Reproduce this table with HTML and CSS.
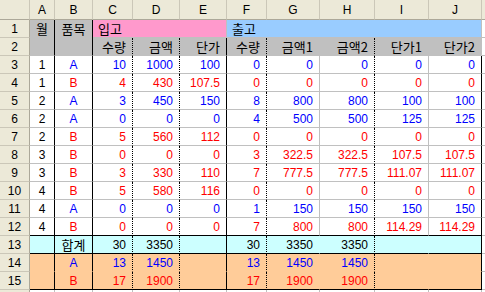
FILE: index.html
```html
<!DOCTYPE html>
<html lang="ko">
<head>
<meta charset="utf-8">
<link rel="stylesheet" href="styles.css">
</head>
<body>
<div class="sheet">
  <div class="row">
    <div class="ch"></div>
    <div class="ch">A</div><div class="ch">B</div><div class="ch">C</div><div class="ch">D</div><div class="ch">E</div>
    <div class="ch">F</div><div class="ch">G</div><div class="ch">H</div><div class="ch">I</div><div class="ch">J</div><div class="ch"></div>
  </div>

  <div class="row">
    <div class="rh">1</div>
    <div class="c g top ctr rb span2 ko">월</div>
    <div class="c g top ctr rb span2 ko">품목</div>
    <div class="c pink title span3 ko">입고</div>
    <div class="c sky title span5 ko">출고</div>
    <div class="c"></div>
  </div>

  <div class="row">
    <div class="rh">2</div>
    <div class="c g num rd ko">수량</div>
    <div class="c g num rd ko">금액</div>
    <div class="c g num rb ko">단가</div>
    <div class="c g num rd ko">수량</div>
    <div class="c g num ko">금액1</div>
    <div class="c g num rd ko">금액2</div>
    <div class="c g num ko">단가1</div>
    <div class="c g num ko">단가2</div>
    <div class="c"></div>
  </div>

  <div class="row blue">
    <div class="rh">3</div>
    <div class="c ctr rb k">1</div><div class="c ctr rb">A</div>
    <div class="c num rd">10</div><div class="c num rd">1000</div><div class="c num rb">100</div>
    <div class="c num rd">0</div><div class="c num">0</div><div class="c num rd">0</div><div class="c num">0</div><div class="c num rb">0</div>
    <div class="c"></div>
  </div>

  <div class="row red">
    <div class="rh">4</div>
    <div class="c ctr rb k">1</div><div class="c ctr rb">B</div>
    <div class="c num rd">4</div><div class="c num rd">430</div><div class="c num rb">107.5</div>
    <div class="c num rd">0</div><div class="c num">0</div><div class="c num rd">0</div><div class="c num">0</div><div class="c num rb">0</div>
    <div class="c"></div>
  </div>

  <div class="row blue">
    <div class="rh">5</div>
    <div class="c ctr rb k">2</div><div class="c ctr rb">A</div>
    <div class="c num rd">3</div><div class="c num rd">450</div><div class="c num rb">150</div>
    <div class="c num rd">8</div><div class="c num">800</div><div class="c num rd">800</div><div class="c num">100</div><div class="c num rb">100</div>
    <div class="c"></div>
  </div>

  <div class="row blue">
    <div class="rh">6</div>
    <div class="c ctr rb k">2</div><div class="c ctr rb">A</div>
    <div class="c num rd">0</div><div class="c num rd">0</div><div class="c num rb">0</div>
    <div class="c num rd">4</div><div class="c num">500</div><div class="c num rd">500</div><div class="c num">125</div><div class="c num rb">125</div>
    <div class="c"></div>
  </div>

  <div class="row red">
    <div class="rh">7</div>
    <div class="c ctr rb k">2</div><div class="c ctr rb">B</div>
    <div class="c num rd">5</div><div class="c num rd">560</div><div class="c num rb">112</div>
    <div class="c num rd">0</div><div class="c num">0</div><div class="c num rd">0</div><div class="c num">0</div><div class="c num rb">0</div>
    <div class="c"></div>
  </div>

  <div class="row red">
    <div class="rh">8</div>
    <div class="c ctr rb k">3</div><div class="c ctr rb">B</div>
    <div class="c num rd">0</div><div class="c num rd">0</div><div class="c num rb">0</div>
    <div class="c num rd">3</div><div class="c num">322.5</div><div class="c num rd">322.5</div><div class="c num">107.5</div><div class="c num rb">107.5</div>
    <div class="c"></div>
  </div>

  <div class="row red">
    <div class="rh">9</div>
    <div class="c ctr rb k">3</div><div class="c ctr rb">B</div>
    <div class="c num rd">3</div><div class="c num rd">330</div><div class="c num rb">110</div>
    <div class="c num rd">7</div><div class="c num">777.5</div><div class="c num rd">777.5</div><div class="c num">111.07</div><div class="c num rb">111.07</div>
    <div class="c"></div>
  </div>

  <div class="row red">
    <div class="rh">10</div>
    <div class="c ctr rb k">4</div><div class="c ctr rb">B</div>
    <div class="c num rd">5</div><div class="c num rd">580</div><div class="c num rb">116</div>
    <div class="c num rd">0</div><div class="c num">0</div><div class="c num rd">0</div><div class="c num">0</div><div class="c num rb">0</div>
    <div class="c"></div>
  </div>

  <div class="row blue">
    <div class="rh">11</div>
    <div class="c ctr rb k">4</div><div class="c ctr rb">A</div>
    <div class="c num rd">0</div><div class="c num rd">0</div><div class="c num rb">0</div>
    <div class="c num rd">1</div><div class="c num">150</div><div class="c num rd">150</div><div class="c num">150</div><div class="c num rb">150</div>
    <div class="c"></div>
  </div>

  <div class="row red last">
    <div class="rh">12</div>
    <div class="c ctr rb k">4</div><div class="c ctr rb">B</div>
    <div class="c num rd">0</div><div class="c num rd">0</div><div class="c num rb">0</div>
    <div class="c num rd">7</div><div class="c num">800</div><div class="c num rd">800</div><div class="c num">114.29</div><div class="c num rb">114.29</div>
    <div class="c plain"></div>
  </div>

  <div class="row sum">
    <div class="rh">13</div>
    <div class="c rb"></div><div class="c ctr rb ko">합계</div>
    <div class="c num rd">30</div><div class="c num rd">3350</div><div class="c num rb"></div>
    <div class="c num rd">30</div><div class="c num rn">3350</div><div class="c num rd">3350</div><div class="c num rn"></div><div class="c num rb"></div>
    <div class="c plain"></div>
  </div>

  <div class="row peach blue mid">
    <div class="rh">14</div>
    <div class="c rb"></div><div class="c ctr rb">A</div>
    <div class="c num rd">13</div><div class="c num rd">1450</div><div class="c num rb"></div>
    <div class="c num rd">13</div><div class="c num rn">1450</div><div class="c num rd">1450</div><div class="c num rn"></div><div class="c num rb"></div>
    <div class="c"></div>
  </div>

  <div class="row peach red end">
    <div class="rh">15</div>
    <div class="c rb"></div><div class="c ctr rb">B</div>
    <div class="c num rd">17</div><div class="c num rd">1900</div><div class="c num rb"></div>
    <div class="c num rd">17</div><div class="c num rn">1900</div><div class="c num rd">1900</div><div class="c num rn"></div><div class="c num rb"></div>
    <div class="c plain"></div>
  </div>

  <div class="row">
    <div class="rh"></div>
    <div class="c"></div><div class="c"></div><div class="c"></div><div class="c"></div><div class="c"></div>
    <div class="c"></div><div class="c"></div><div class="c"></div><div class="c"></div><div class="c"></div><div class="c"></div>
  </div>
</div>
</body>
</html>
```

FILE: styles.css
```css
html, body {
  margin: 0;
  padding: 0;
  background: #ffffff;
  overflow: hidden;
}

.sheet {
  display: grid;
  grid-template-columns: 30px 25px 38px 40px 47px 47px 40px 53px 55px 54px 53px 20px;
  grid-template-rows: 20px repeat(15, 18px) 3px;
  width: 502px;
  font-family: "Liberation Sans", "Noto Sans CJK KR", sans-serif;
  font-size: 12px;
  color: #000000;
}

.row {
  display: contents;
}

.ch {
  box-sizing: border-box;
  background: #ece9d8;
  border-right: 1px solid #cbc7b8;
  border-bottom: 1px solid #aca899;
  display: flex;
  align-items: center;
  justify-content: center;
  padding-top: 1px;
  line-height: 1;
  color: #000000;
}

.rh {
  box-sizing: border-box;
  background: #ece9d8;
  border-right: 1px solid #aca899;
  border-bottom: 1px solid #cbc7b8;
  display: flex;
  align-items: center;
  justify-content: center;
  line-height: 1;
  color: #000000;
}

.c {
  box-sizing: border-box;
  border-right: 1px solid #c0c0c0;
  border-bottom: 1px solid #c0c0c0;
  display: flex;
  align-items: center;
  padding: 0 6px 0 5px;
  white-space: nowrap;
  overflow: hidden;
  line-height: 1;
}

.ko {
  font-family: "Noto Sans CJK KR", "Liberation Sans", sans-serif;
  font-size: 13px;
}

.num { justify-content: flex-end; }
.ctr { justify-content: center; padding: 0; }
.rb { border-right-color: #000000; }
.rd { border-right: 1px dotted #000000; }
.rn { border-right-color: transparent; }

.blue { color: #0000ff; }
.red { color: #ff0000; }
.k { color: #000000; }

.g { background: #c0c0c0; }
.top { align-items: flex-start; padding-top: 2px; }
.span2 { grid-row: span 2; }
.span3 { grid-column: span 3; }
.span5 { grid-column: span 5; }

.title { padding-left: 5px; }
.pink { background: #ff99cc; }
.sky { background: #99ccff; }

.last > .c { border-bottom-color: #000000; }
.last > .plain { border-bottom-color: #c0c0c0; }

.sum > .c {
  background: #ccffff;
  border-bottom-color: #000000;
  color: #000000;
}
.peach > .c { background: #ffcc99; }
.mid > .c { border-bottom-color: transparent; }
.end > .c { border-bottom-color: #000000; }
.sum > .plain, .end > .plain { background: #ffffff; border-bottom-color: #c0c0c0; }
.mid > .c:last-child { background: #ffffff; border-bottom-color: #c0c0c0; }
```
